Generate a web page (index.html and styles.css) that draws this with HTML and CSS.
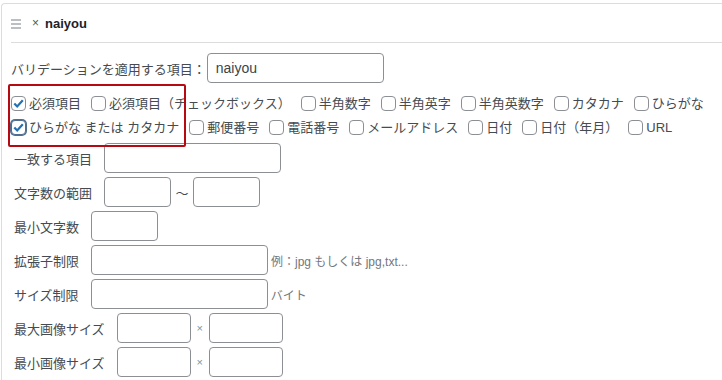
FILE: index.html
```html
<!DOCTYPE html>
<html lang="ja">
<head>
    <meta charset="UTF-8">
    <meta name="viewport" content="width=device-width, initial-scale=1.0">
    <title>Validation - naiyou</title>
    <link rel="stylesheet" href="styles.css">
</head>
<body>
    <div class="postbox">
        <div class="postbox-header">
            <span class="handle">
                <svg width="10" height="10" viewBox="0 0 10 10">
                    <path d="M0 1H10M0 5H10M0 9H10" stroke="#a7aaad" stroke-width="1.4"/>
                </svg>
            </span>
            <span class="remove">×</span>
            <span class="title">naiyou</span>
        </div>

        <div class="inside">
            <div class="target-row">
                <label for="target">バリデーションを適用する項目：</label>
                <input type="text" id="target" class="text-input wide" value="naiyou">
            </div>

            <div class="rules">
                <span class="marker"></span>
                <label class="check"><span class="box checked"><svg width="13" height="13" viewBox="0 0 13 13"><path d="M2.3 6.4L5.2 9.4L10.8 3.2" fill="none" stroke="#2271b1" stroke-width="2.2"/></svg></span>必須項目</label>
                <label class="check"><span class="box"></span>必須項目（チェックボックス）</label>
                <label class="check"><span class="box"></span>半角数字</label>
                <label class="check"><span class="box"></span>半角英字</label>
                <label class="check"><span class="box"></span>半角英数字</label>
                <label class="check"><span class="box"></span>カタカナ</label>
                <label class="check"><span class="box"></span>ひらがな</label>
                <label class="check"><span class="box checked focused"><svg width="13" height="13" viewBox="0 0 13 13"><path d="M2.3 6.4L5.2 9.4L10.8 3.2" fill="none" stroke="#2271b1" stroke-width="2.2"/></svg></span>ひらがな または カタカナ</label>
                <label class="check"><span class="box"></span>郵便番号</label>
                <label class="check"><span class="box"></span>電話番号</label>
                <label class="check"><span class="box"></span>メールアドレス</label>
                <label class="check"><span class="box"></span>日付</label>
                <label class="check"><span class="box"></span>日付（年月）</label>
                <label class="check"><span class="box"></span>URL</label>
            </div>

            <div class="fields">
                <div class="field">
                    <span class="field-label">一致する項目</span>
                    <input type="text" class="text-input wide">
                </div>
                <div class="field">
                    <span class="field-label">文字数の範囲</span>
                    <input type="text" class="text-input small">
                    <span class="range-sep">〜</span>
                    <input type="text" class="text-input small">
                </div>
                <div class="field">
                    <span class="field-label">最小文字数</span>
                    <input type="text" class="text-input small">
                </div>
                <div class="field">
                    <span class="field-label">拡張子制限</span>
                    <input type="text" class="text-input wide">
                    <span class="hint">例：jpg もしくは jpg,txt...</span>
                </div>
                <div class="field">
                    <span class="field-label">サイズ制限</span>
                    <input type="text" class="text-input wide">
                    <span class="hint">バイト</span>
                </div>
                <div class="field">
                    <span class="field-label">最大画像サイズ</span>
                    <input type="text" class="text-input image">
                    <span class="times">×</span>
                    <input type="text" class="text-input image">
                </div>
                <div class="field">
                    <span class="field-label">最小画像サイズ</span>
                    <input type="text" class="text-input image">
                    <span class="times">×</span>
                    <input type="text" class="text-input image">
                </div>
            </div>
        </div>
    </div>
</body>
</html>
```

FILE: styles.css
```css
:root {
    --text-main: #464b51;
    --text-dark: #1d2327;
    --text-muted: #72777c;
    --border-light: #dcdcde;
    --border-input: #8c8f94;
    --accent-blue: #2271b1;
    --marker-red: #b50a12;
}

html,
body {
    overflow: hidden;
}

body {
    margin: 0;
    background-color: #ffffff;
    color: var(--text-main);
    font-family: "Liberation Sans", "Noto Sans CJK JP", sans-serif;
    font-size: 13px;
}

.postbox {
    box-sizing: border-box;
    width: calc(100% - 1px);
    margin: 3px 0 0 1px;
    border: 1px solid var(--border-light);
    border-right: none;
    border-radius: 4px 0 0 4px;
}

.postbox-header {
    display: flex;
    align-items: center;
    height: 38px;
    margin-left: 9px;
    border-bottom: 1px solid var(--border-light);
}

.handle {
    display: flex;
    width: 10px;
    height: 10px;
    margin-top: 1px;
}

.remove {
    margin-left: 11px;
    color: #50575e;
    font-size: 12px;
    line-height: 1;
}

.title {
    margin-left: 6px;
    color: var(--text-dark);
    font-weight: 700;
    font-size: 13px;
}

.inside {
    padding: 10px 0 12px 9px;
}

.target-row {
    display: flex;
    align-items: center;
    gap: 1px;
    height: 30px;
}

.text-input {
    box-sizing: border-box;
    height: 30px;
    margin: 0;
    padding: 0 8px;
    border: 1px solid var(--border-input);
    border-radius: 4px;
    background-color: #ffffff;
    color: #3c434a;
    font-family: inherit;
    font-size: 14px;
}

.text-input.wide {
    width: 177px;
}

.text-input.small {
    width: 67px;
}

.text-input.image {
    width: 74px;
}

.rules {
    position: relative;
    display: flex;
    flex-wrap: wrap;
    margin-top: 8px;
}

.marker {
    position: absolute;
    left: -3px;
    top: -7px;
    box-sizing: border-box;
    width: 178px;
    height: 63px;
    border: 2px solid var(--marker-red);
    border-radius: 2px;
    pointer-events: none;
}

.check {
    display: inline-flex;
    align-items: center;
    height: 24px;
    margin-right: 10px;
    white-space: nowrap;
    line-height: 1;
}

.box {
    box-sizing: border-box;
    display: inline-flex;
    align-items: center;
    justify-content: center;
    width: 15px;
    height: 15px;
    margin-right: 3px;
    border: 1px solid var(--border-input);
    border-radius: 4px;
    background-color: #ffffff;
}

.box.focused {
    border-color: #4f6f8f;
    box-shadow: 0 0 0 1px #4f6f8f;
}

.fields {
    margin-top: 4px;
    padding-left: 3px;
}

.field {
    display: flex;
    align-items: center;
    height: 30px;
    margin-bottom: 4px;
}

.field-label {
    margin-right: 12px;
    white-space: nowrap;
}

.range-sep {
    width: 22px;
    text-align: center;
}

.times {
    width: 18px;
    color: var(--border-input);
    font-size: 11px;
    text-align: center;
}

.hint {
    margin-left: 3px;
    color: var(--text-muted);
    font-size: 12px;
}
```
